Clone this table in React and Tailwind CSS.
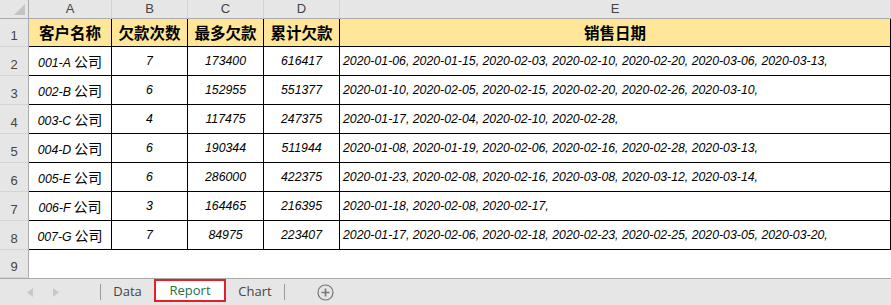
const rows = [
  ['001-A', 7, 173400, 616417, '2020-01-06, 2020-01-15, 2020-02-03, 2020-02-10, 2020-02-20, 2020-03-06, 2020-03-13,'],
  ['002-B', 6, 152955, 551377, '2020-01-10, 2020-02-05, 2020-02-15, 2020-02-20, 2020-02-26, 2020-03-10,'],
  ['003-C', 4, 117475, 247375, '2020-01-17, 2020-02-04, 2020-02-10, 2020-02-28,'],
  ['004-D', 6, 190344, 511944, '2020-01-08, 2020-01-19, 2020-02-06, 2020-02-16, 2020-02-28, 2020-03-13,'],
  ['005-E', 6, 286000, 422375, '2020-01-23, 2020-02-08, 2020-02-16, 2020-03-08, 2020-03-12, 2020-03-14,'],
  ['006-F', 3, 164465, 216395, '2020-01-18, 2020-02-08, 2020-02-17,'],
  ['007-G', 7, 84975, 223407, '2020-01-17, 2020-02-06, 2020-02-18, 2020-02-23, 2020-02-25, 2020-03-05, 2020-03-20,'],
]

const cjk = { fontFamily: '"Noto Sans CJK SC", "Liberation Sans", sans-serif' }

function RowNum({ n, h }) {
  return (
    <div className={`flex w-[29px] shrink-0 items-end justify-center border-r border-b border-r-[#ababab] border-b-[#d4d4d4] bg-[#e6e6e6] pb-[1px] text-[13px] text-[#444] ${h}`}>
      {n}
    </div>
  )
}

function ColumnHeaders() {
  const cols = [
    ['A', 'w-[83px]'],
    ['B', 'w-[76px]'],
    ['C', 'w-[76px]'],
    ['D', 'w-[76px]'],
    ['E', 'flex-1'],
  ]
  return (
    <div className="flex h-[19px]">
      <div className="relative w-[29px] shrink-0 border-r border-b border-[#ababab] bg-[#e6e6e6]">
        <svg className="absolute right-[3px] bottom-[3px]" width="11" height="11" viewBox="0 0 11 11">
          <polygon points="11,0 11,11 0,11" fill="#c4c4c4" />
        </svg>
      </div>
      {cols.map(([c, w]) => (
        <div key={c} className={`flex ${w} shrink-0 items-center justify-center border-r border-b border-r-[#d4d4d4] border-b-[#ababab] bg-[#e6e6e6] text-[13px] text-[#444]`}>
          {c}
        </div>
      ))}
    </div>
  )
}

function TabBar() {
  return (
    <div className="flex h-[27px] items-stretch border-t border-[#ababab] bg-[#e6e6e6] text-[13px] text-[#444]" style={{ fontFamily: '"Open Sans", sans-serif' }}>
      <div className="flex w-[100px] items-center gap-[20px] pl-[27px]">
        <svg width="6" height="9" viewBox="0 0 6 9"><polygon points="6,0 6,9 0,4.5" fill="#c8c8c8" /></svg>
        <svg width="6" height="9" viewBox="0 0 6 9"><polygon points="0,0 0,9 6,4.5" fill="#c8c8c8" /></svg>
      </div>
      <div className="my-[5px] w-px bg-[#9a9a9a]" />
      <div className="flex w-[53px] items-center justify-center">Data</div>
      <div className="mb-[3px] flex w-[72px] items-center justify-center border-2 border-[#e3202a] bg-white text-[#217346]">Report</div>
      <div className="flex w-[58px] items-center justify-center">Chart</div>
      <div className="my-[5px] w-px bg-[#9a9a9a]" />
      <div className="flex items-center pl-[32px]">
        <svg width="17" height="17" viewBox="0 0 17 17">
          <circle cx="8.5" cy="8.5" r="7.5" fill="none" stroke="#777" strokeWidth="1.2" />
          <path d="M8.5 4.5v8M4.5 8.5h8" stroke="#777" strokeWidth="1.6" />
        </svg>
      </div>
    </div>
  )
}

export default function App() {
  return (
    <div className="h-[305px] w-[891px] overflow-hidden bg-white" style={{ fontFamily: '"Liberation Sans", Arial, sans-serif' }}>
      <ColumnHeaders />
      <div className="flex h-[28px]">
        <RowNum n={1} h="h-[28px]" />
        {[
          ['客户名称', 'w-[83px]'],
          ['欠款次数', 'w-[76px]'],
          ['最多欠款', 'w-[76px]'],
          ['累计欠款', 'w-[76px]'],
          ['销售日期', 'flex-1'],
        ].map(([t, w]) => (
          <div key={t} className={`flex ${w} shrink-0 items-center justify-center border-r border-b border-black bg-[#ffe699] text-[15.5px] font-bold text-black`} style={cjk}>
            {t}
          </div>
        ))}
      </div>
      {rows.map((r, i) => (
        <div key={r[0]} className="flex h-[29px]">
          <RowNum n={i + 2} h="h-[29px]" />
          <div className="flex w-[83px] shrink-0 items-center justify-center border-r border-b border-black pt-[1px] text-black">
            <span className="leading-none whitespace-nowrap">
              <span className="text-[12.3px] italic">{r[0]}</span>
              <span className="ml-[3px] align-baseline text-[14px]" style={cjk}>公司</span>
            </span>
          </div>
          {[r[1], r[2], r[3]].map((v, j) => (
            <div key={j} className="flex w-[76px] shrink-0 items-center justify-center border-r border-b border-black pt-[1px] text-[12.3px] text-black italic">
              {v}
            </div>
          ))}
          <div className="flex flex-1 items-center border-r border-b border-black pt-[1px] pl-[3px] text-[12.3px] whitespace-nowrap text-black italic">
            {r[4]}
          </div>
        </div>
      ))}
      <div className="flex h-[28px]">
        <RowNum n={9} h="h-[28px]" />
      </div>
      <TabBar />
    </div>
  )
}
